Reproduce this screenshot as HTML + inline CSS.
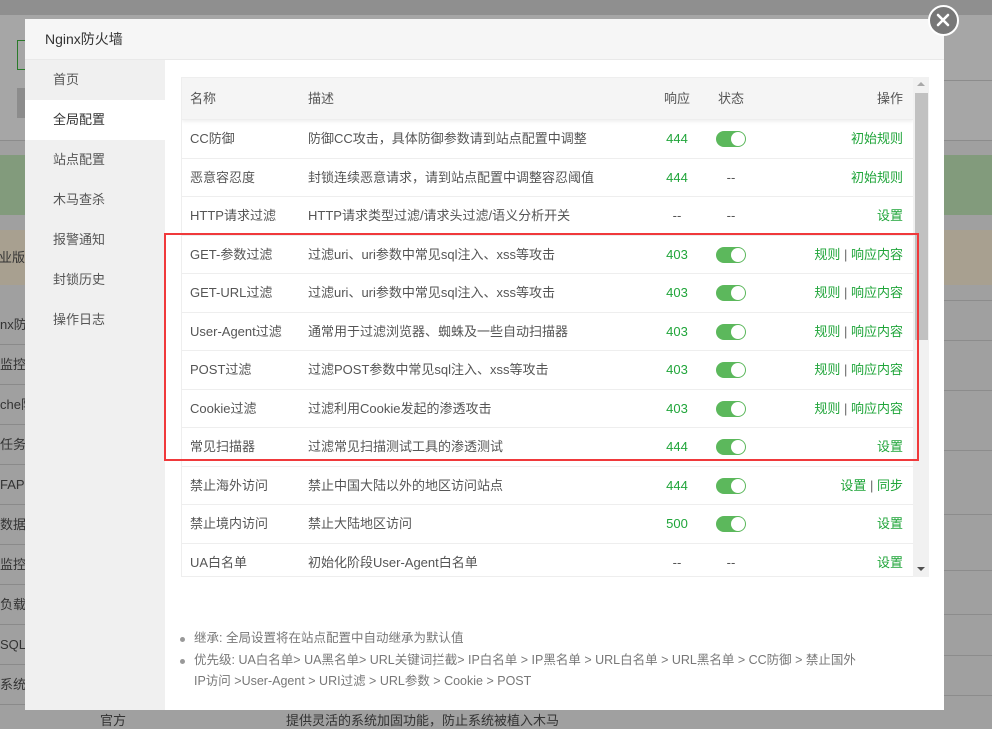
<!DOCTYPE html>
<html><head><meta charset="utf-8"><style>
*{box-sizing:border-box;margin:0;padding:0}
body{width:992px;height:719px;overflow:hidden;position:relative;background:#a0a0a0;font-family:"Liberation Sans","Noto Sans CJK SC",sans-serif;font-size:13px;color:#555}
.bg{position:absolute;left:0;right:0}
.bgrow{position:absolute;left:0;width:25px;height:40px;border-bottom:1px solid #8a8a8a;color:#333;font-size:13px;line-height:40px;white-space:nowrap;overflow:hidden;text-align:right}
.dlg{position:absolute;left:25px;top:19px;width:919px;height:691px;background:#fff}
.hd{height:41px;background:#f6f6f6;border-bottom:1px solid #e9e9e9;padding-left:20px;line-height:41px;font-size:14px;color:#333}
.side{position:absolute;left:0;top:41px;width:140px;bottom:0;background:#f0f0f0}
.side div{height:40px;line-height:40px;padding-left:28px;color:#555}
.side .on{background:#fff;color:#333}
.tb{position:absolute;left:156px;top:58px;width:732px;height:500px;border:1px solid #eee;border-right:none;overflow:hidden}
.row{height:38.5px;border-bottom:1px solid #eee;position:relative;line-height:38px;white-space:nowrap}
.row span{position:absolute}
.th{height:42px;background:#f5f5f5;line-height:42px;box-shadow:0 2px 3px rgba(0,0,0,.06)}
.c1{left:8px}.c2{left:126px}.c3{left:480px;width:30px;text-align:center}.c4{left:534px;width:30px;text-align:center}.c5{right:10px}
.g{color:#20a53a}
.tg{position:absolute;left:534px;top:11px;width:30px;height:16px;border-radius:8px;background:#5cb85c}
.tg:after{content:"";position:absolute;right:1px;top:1px;width:14px;height:14px;border-radius:7px;background:#fff}
.sep{color:#666;font-weight:normal}
.sb{position:absolute;left:888px;top:58px;width:16px;height:500px;background:#f1f1f1}
.red{position:absolute;left:139px;top:214px;width:755px;height:228px;border:2px solid #f0393b}
.notes{position:absolute;left:155px;top:609px;color:#777;font-size:12.5px;line-height:21.5px}
.notes li{list-style:none;padding-left:14px;position:relative}
.notes li:before{content:"";position:absolute;left:0;top:9px;width:5px;height:5px;border-radius:3px;background:#999}
.x{position:absolute;left:928px;top:5px;width:31px;height:31px;border-radius:50%;background:#777;border:2.5px solid #fff}
</style></head><body>
<div class="bg" style="top:0;height:15px;background:#8f8f8f"></div>
<div class="bg" style="top:15px;height:125px;background:#a6a6a6"></div>
<div style="position:absolute;left:17px;top:40px;width:10px;height:30px;border:1px solid #2a7a2a"></div>
<div style="position:absolute;left:17px;top:88px;width:10px;height:30px;background:#8c8c8c"></div>
<div class="bg" style="top:140px;height:1px;background:#8c8c8c"></div>
<div class="bg" style="top:155px;height:60px;background:#829b7c"></div>
<div class="bg" style="top:230px;height:55px;background:#a8a090"></div>
<div style="position:absolute;left:0;top:230px;width:25px;line-height:55px;overflow:hidden;color:#333;white-space:nowrap;direction:rtl">企业版</div>
<div class="bgrow" style="top:305px">nx防</div>
<div class="bgrow" style="top:345px">监控</div>
<div class="bgrow" style="top:385px">che防</div>
<div class="bgrow" style="top:425px">任务</div>
<div class="bgrow" style="top:465px">FAPP</div>
<div class="bgrow" style="top:505px">数据</div>
<div class="bgrow" style="top:545px">监控</div>
<div class="bgrow" style="top:585px">负载</div>
<div class="bgrow" style="top:625px">SQL主</div>
<div class="bgrow" style="top:665px">系统</div>
<div style="position:absolute;left:944px;top:0;width:48px;height:719px">
<div style="position:absolute;top:80px;width:48px;height:1px;background:#8c8c8c"></div>
<div style="position:absolute;top:140px;width:48px;height:1px;background:#8c8c8c"></div>
<div style="position:absolute;top:155px;width:48px;height:60px;background:#829b7c"></div>
<div style="position:absolute;top:230px;width:48px;height:55px;background:#a8a090"></div>
<div style="position:absolute;top:300px;width:48px;height:1px;background:#8c8c8c"></div>
<div style="position:absolute;top:340px;width:48px;height:1px;background:#8c8c8c"></div>
<div style="position:absolute;top:390px;width:48px;height:1px;background:#8c8c8c"></div>
<div style="position:absolute;top:450px;width:48px;height:1px;background:#8c8c8c"></div>
<div style="position:absolute;top:514px;width:48px;height:1px;background:#8c8c8c"></div>
<div style="position:absolute;top:570px;width:48px;height:1px;background:#8c8c8c"></div>
<div style="position:absolute;top:614px;width:48px;height:1px;background:#8c8c8c"></div>
<div style="position:absolute;top:655px;width:48px;height:1px;background:#8c8c8c"></div>
<div style="position:absolute;top:695px;width:48px;height:1px;background:#8c8c8c"></div>
</div>
<div style="position:absolute;left:100px;top:710px;color:#333;font-size:13px;white-space:nowrap">官方<span style="margin-left:160px">提供灵活的系统加固功能，防止系统被植入木马</span></div>
<div class="dlg">
<div class="hd">Nginx防火墙</div>
<div class="side"><div>首页</div><div class="on">全局配置</div><div>站点配置</div><div>木马查杀</div><div>报警通知</div><div>封锁历史</div><div>操作日志</div></div>
<div class="tb">
<div class="row th"><span class="c1">名称</span><span class="c2">描述</span><span class="c3">响应</span><span class="c4">状态</span><span class="c5">操作</span></div>
<div class="row"><span class="c1">CC防御</span><span class="c2">防御CC攻击，具体防御参数请到站点配置中调整</span><span class="c3 g">444</span><i class="tg"></i><span class="c5 g">初始规则</span></div>
<div class="row"><span class="c1">恶意容忍度</span><span class="c2">封锁连续恶意请求，请到站点配置中调整容忍阈值</span><span class="c3 g">444</span><span class="c4">--</span><span class="c5 g">初始规则</span></div>
<div class="row"><span class="c1">HTTP请求过滤</span><span class="c2">HTTP请求类型过滤/请求头过滤/语义分析开关</span><span class="c3">--</span><span class="c4">--</span><span class="c5 g">设置</span></div>
<div class="row"><span class="c1">GET-参数过滤</span><span class="c2">过滤uri、uri参数中常见sql注入、xss等攻击</span><span class="c3 g">403</span><i class="tg"></i><span class="c5 g">规则 <b class="sep">|</b> 响应内容</span></div>
<div class="row"><span class="c1">GET-URL过滤</span><span class="c2">过滤uri、uri参数中常见sql注入、xss等攻击</span><span class="c3 g">403</span><i class="tg"></i><span class="c5 g">规则 <b class="sep">|</b> 响应内容</span></div>
<div class="row"><span class="c1">User-Agent过滤</span><span class="c2">通常用于过滤浏览器、蜘蛛及一些自动扫描器</span><span class="c3 g">403</span><i class="tg"></i><span class="c5 g">规则 <b class="sep">|</b> 响应内容</span></div>
<div class="row"><span class="c1">POST过滤</span><span class="c2">过滤POST参数中常见sql注入、xss等攻击</span><span class="c3 g">403</span><i class="tg"></i><span class="c5 g">规则 <b class="sep">|</b> 响应内容</span></div>
<div class="row"><span class="c1">Cookie过滤</span><span class="c2">过滤利用Cookie发起的渗透攻击</span><span class="c3 g">403</span><i class="tg"></i><span class="c5 g">规则 <b class="sep">|</b> 响应内容</span></div>
<div class="row"><span class="c1">常见扫描器</span><span class="c2">过滤常见扫描测试工具的渗透测试</span><span class="c3 g">444</span><i class="tg"></i><span class="c5 g">设置</span></div>
<div class="row"><span class="c1">禁止海外访问</span><span class="c2">禁止中国大陆以外的地区访问站点</span><span class="c3 g">444</span><i class="tg"></i><span class="c5 g">设置 <b class="sep">|</b> 同步</span></div>
<div class="row"><span class="c1">禁止境内访问</span><span class="c2">禁止大陆地区访问</span><span class="c3 g">500</span><i class="tg"></i><span class="c5 g">设置</span></div>
<div class="row"><span class="c1">UA白名单</span><span class="c2">初始化阶段User-Agent白名单</span><span class="c3">--</span><span class="c4">--</span><span class="c5 g">设置</span></div>
</div>
<div class="sb">
<div style="position:absolute;left:4px;top:5px;border:4px solid transparent;border-bottom:4px solid #a8a8a8;border-top:none"></div>
<div style="position:absolute;left:2px;top:16px;width:13px;height:247px;background:#c1c1c1"></div>
<div style="position:absolute;left:4px;bottom:6px;border:4px solid transparent;border-top:4px solid #505050;border-bottom:none"></div>
</div>
<div class="red"></div>
<ul class="notes">
<li>继承: 全局设置将在站点配置中自动继承为默认值</li>
<li>优先级: UA白名单&gt; UA黑名单&gt; URL关键词拦截&gt; IP白名单 &gt; IP黑名单 &gt; URL白名单 &gt; URL黑名单 &gt; CC防御 &gt; 禁止国外<br>IP访问 &gt;User-Agent &gt; URI过滤 &gt; URL参数 &gt; Cookie &gt; POST</li>
</ul>
</div>
<div class="x"><svg width="26" height="26" viewBox="0 0 26 26" style="position:absolute;left:0;top:0"><path d="M8 8L18 18M18 8L8 18" stroke="#fff" stroke-width="2.6" stroke-linecap="round"/></svg></div>
</body></html>
